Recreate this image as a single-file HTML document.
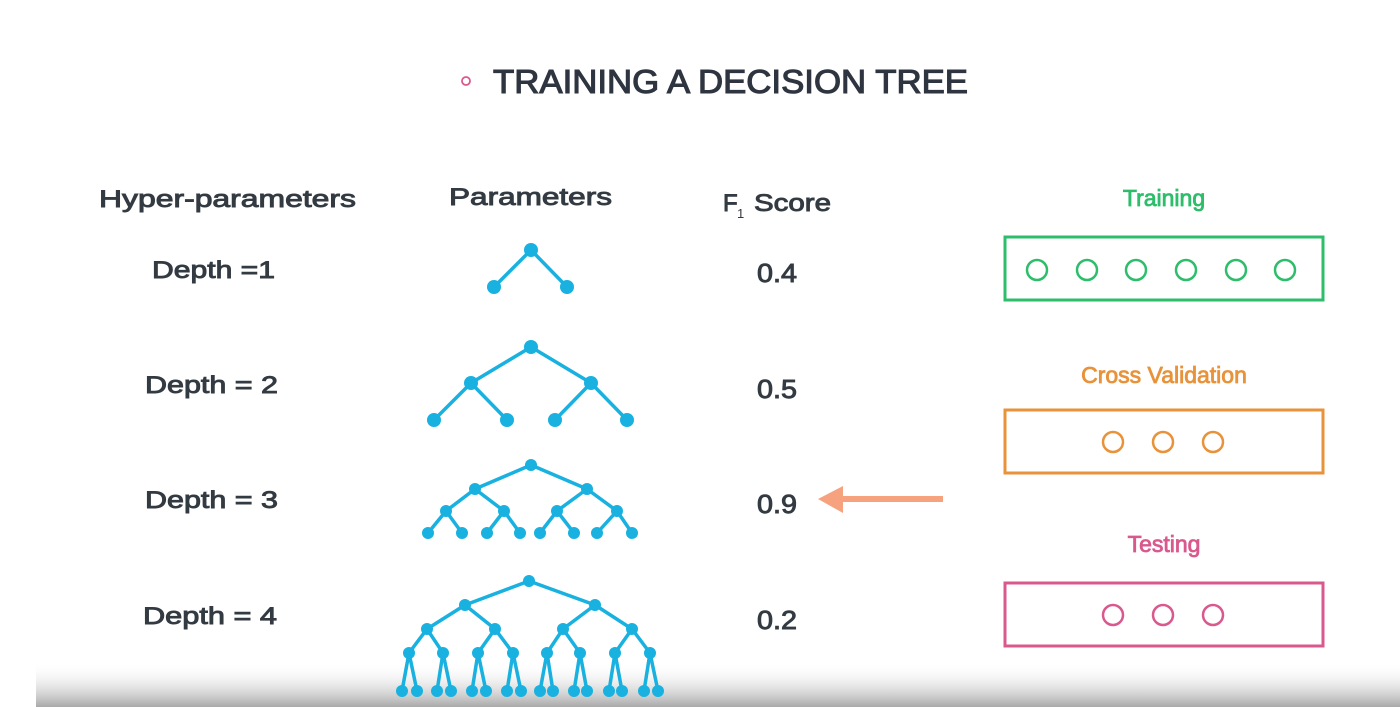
<!DOCTYPE html>
<html><head><meta charset="utf-8"><style>
html,body{margin:0;padding:0;background:#fff;width:1400px;height:707px;overflow:hidden}
svg{display:block}
text{font-family:"Liberation Sans",sans-serif}
.t{fill:#333a42;font-size:24px;stroke:#333a42;stroke-width:0.9}
.s{fill:#333a42;font-size:26px;stroke:#333a42;stroke-width:0.9}
.b line{stroke:#18b1e0;stroke-width:3.5}
.b circle{fill:#18b1e0}
</style></head><body>
<svg width="1400" height="707" viewBox="0 0 1400 707" xmlns="http://www.w3.org/2000/svg">
<defs><linearGradient id="g" x1="0" y1="0" x2="0" y2="1"><stop offset="0" stop-color="#fff" stop-opacity="0"/><stop offset="1" stop-color="#a8a8a8"/></linearGradient></defs>
<rect x="36" y="662" width="1364" height="45" fill="url(#g)"/>
<circle cx="466" cy="81" r="4" fill="none" stroke="#d9598e" stroke-width="1.8"/>
<text x="493" y="93" font-size="33" fill="#2e3540" stroke="#2e3540" stroke-width="1.1" textLength="475" lengthAdjust="spacingAndGlyphs">TRAINING A DECISION TREE</text>

<text class="t" x="99" y="207" textLength="257" lengthAdjust="spacingAndGlyphs">Hyper-parameters</text>
<text class="t" x="449" y="205" textLength="163" lengthAdjust="spacingAndGlyphs">Parameters</text>
<text class="t" x="723" y="211">F</text><text x="737" y="218" font-size="13" fill="#333a42">1</text>
<text class="t" x="754" y="211" textLength="77" lengthAdjust="spacingAndGlyphs">Score</text>

<text class="t" x="152" y="278" textLength="123" lengthAdjust="spacingAndGlyphs">Depth =1</text>
<text class="t" x="145" y="393" textLength="133" lengthAdjust="spacingAndGlyphs">Depth = 2</text>
<text class="t" x="145" y="508" textLength="133" lengthAdjust="spacingAndGlyphs">Depth = 3</text>
<text class="t" x="143" y="624" textLength="134" lengthAdjust="spacingAndGlyphs">Depth = 4</text>

<text class="s" x="757" y="282" textLength="40" lengthAdjust="spacingAndGlyphs">0.4</text>
<text class="s" x="757" y="398" textLength="40" lengthAdjust="spacingAndGlyphs">0.5</text>
<text class="s" x="757" y="513" textLength="40" lengthAdjust="spacingAndGlyphs">0.9</text>
<text class="s" x="757" y="629" textLength="40" lengthAdjust="spacingAndGlyphs">0.2</text>

<g class="b">
<line x1="531" y1="250" x2="494" y2="287"/><line x1="531" y1="250" x2="567" y2="287"/>
<circle cx="531" cy="250" r="7"/><circle cx="494" cy="287" r="7"/><circle cx="567" cy="287" r="7"/>
<line x1="531" y1="347" x2="471" y2="383"/><line x1="531" y1="347" x2="591" y2="383"/>
<line x1="471" y1="383" x2="434" y2="420"/><line x1="471" y1="383" x2="507" y2="420"/>
<line x1="591" y1="383" x2="555" y2="420"/><line x1="591" y1="383" x2="627" y2="420"/>
<circle cx="531" cy="347" r="7"/><circle cx="471" cy="383" r="7"/><circle cx="591" cy="383" r="7"/>
<circle cx="434" cy="420" r="7"/><circle cx="507" cy="420" r="7"/><circle cx="555" cy="420" r="7"/><circle cx="627" cy="420" r="7"/>
<line x1="531" y1="465" x2="475" y2="489"/><line x1="531" y1="465" x2="587" y2="489"/>
<line x1="475" y1="489" x2="446" y2="511"/><line x1="475" y1="489" x2="504" y2="511"/>
<line x1="587" y1="489" x2="557" y2="511"/><line x1="587" y1="489" x2="617" y2="511"/>
<line x1="446" y1="511" x2="428" y2="533"/><line x1="446" y1="511" x2="462" y2="533"/>
<line x1="504" y1="511" x2="487" y2="533"/><line x1="504" y1="511" x2="520" y2="533"/>
<line x1="557" y1="511" x2="540" y2="533"/><line x1="557" y1="511" x2="574" y2="533"/>
<line x1="617" y1="511" x2="597" y2="533"/><line x1="617" y1="511" x2="632" y2="533"/>
<circle cx="531" cy="465" r="6"/><circle cx="475" cy="489" r="6"/><circle cx="587" cy="489" r="6"/>
<circle cx="446" cy="511" r="6"/><circle cx="504" cy="511" r="6"/><circle cx="557" cy="511" r="6"/><circle cx="617" cy="511" r="6"/>
<circle cx="428" cy="533" r="6"/><circle cx="462" cy="533" r="6"/><circle cx="487" cy="533" r="6"/><circle cx="520" cy="533" r="6"/>
<circle cx="540" cy="533" r="6"/><circle cx="574" cy="533" r="6"/><circle cx="597" cy="533" r="6"/><circle cx="632" cy="533" r="6"/>
<line x1="529" y1="581" x2="465" y2="605"/><line x1="529" y1="581" x2="595" y2="605"/>
<line x1="465" y1="605" x2="427" y2="629"/><line x1="465" y1="605" x2="495" y2="629"/>
<line x1="595" y1="605" x2="563" y2="629"/><line x1="595" y1="605" x2="632" y2="629"/>
<line x1="427" y1="629" x2="409" y2="653"/><line x1="427" y1="629" x2="443" y2="653"/>
<line x1="495" y1="629" x2="478" y2="653"/><line x1="495" y1="629" x2="513" y2="653"/>
<line x1="563" y1="629" x2="547" y2="653"/><line x1="563" y1="629" x2="580" y2="653"/>
<line x1="632" y1="629" x2="615" y2="653"/><line x1="632" y1="629" x2="650" y2="653"/>
<line x1="409" y1="653" x2="402" y2="691"/><line x1="409" y1="653" x2="417" y2="691"/>
<line x1="443" y1="653" x2="437" y2="691"/><line x1="443" y1="653" x2="451" y2="691"/>
<line x1="478" y1="653" x2="472" y2="691"/><line x1="478" y1="653" x2="486" y2="691"/>
<line x1="513" y1="653" x2="507" y2="691"/><line x1="513" y1="653" x2="521" y2="691"/>
<line x1="547" y1="653" x2="540" y2="691"/><line x1="547" y1="653" x2="553" y2="691"/>
<line x1="580" y1="653" x2="574" y2="691"/><line x1="580" y1="653" x2="587" y2="691"/>
<line x1="615" y1="653" x2="609" y2="691"/><line x1="615" y1="653" x2="622" y2="691"/>
<line x1="650" y1="653" x2="644" y2="691"/><line x1="650" y1="653" x2="658" y2="691"/>
<circle cx="529" cy="581" r="6"/><circle cx="465" cy="605" r="6"/><circle cx="595" cy="605" r="6"/>
<circle cx="427" cy="629" r="6"/><circle cx="495" cy="629" r="6"/><circle cx="563" cy="629" r="6"/><circle cx="632" cy="629" r="6"/>
<circle cx="409" cy="653" r="6"/><circle cx="443" cy="653" r="6"/><circle cx="478" cy="653" r="6"/><circle cx="513" cy="653" r="6"/>
<circle cx="547" cy="653" r="6"/><circle cx="580" cy="653" r="6"/><circle cx="615" cy="653" r="6"/><circle cx="650" cy="653" r="6"/>
<circle cx="402" cy="691" r="6"/><circle cx="417" cy="691" r="6"/><circle cx="437" cy="691" r="6"/><circle cx="451" cy="691" r="6"/>
<circle cx="472" cy="691" r="6"/><circle cx="486" cy="691" r="6"/><circle cx="507" cy="691" r="6"/><circle cx="521" cy="691" r="6"/>
<circle cx="540" cy="691" r="6"/><circle cx="553" cy="691" r="6"/><circle cx="574" cy="691" r="6"/><circle cx="587" cy="691" r="6"/>
<circle cx="609" cy="691" r="6"/><circle cx="622" cy="691" r="6"/><circle cx="644" cy="691" r="6"/><circle cx="658" cy="691" r="6"/>
</g>

<rect x="838" y="496" width="105" height="6" fill="#f6a27e"/>
<polygon points="818,499 843,486 843,513" fill="#f6a27e"/>

<text x="1164" y="206" font-size="23" fill="#2ebd6b" stroke="#2ebd6b" stroke-width="0.8" text-anchor="middle">Training</text>
<rect x="1005" y="237" width="318" height="63" fill="none" stroke="#2ebd6b" stroke-width="3"/>
<g fill="none" stroke="#2ebd6b" stroke-width="2.5">
<circle cx="1037" cy="270" r="10"/><circle cx="1087" cy="270" r="10"/><circle cx="1136" cy="270" r="10"/><circle cx="1186" cy="270" r="10"/><circle cx="1236" cy="270" r="10"/><circle cx="1285" cy="270" r="10"/>
</g>
<text x="1164" y="383" font-size="23" fill="#e8923a" stroke="#e8923a" stroke-width="0.8" text-anchor="middle">Cross Validation</text>
<rect x="1005" y="410" width="318" height="63" fill="none" stroke="#e8923a" stroke-width="3"/>
<g fill="none" stroke="#e8923a" stroke-width="2.5">
<circle cx="1113" cy="442" r="10"/><circle cx="1163" cy="442" r="10"/><circle cx="1213" cy="442" r="10"/>
</g>
<text x="1164" y="552" font-size="23" fill="#d9598e" stroke="#d9598e" stroke-width="0.8" text-anchor="middle">Testing</text>
<rect x="1005" y="583" width="318" height="63" fill="none" stroke="#d9598e" stroke-width="3"/>
<g fill="none" stroke="#d9598e" stroke-width="2.5">
<circle cx="1113" cy="615" r="10"/><circle cx="1163" cy="615" r="10"/><circle cx="1213" cy="615" r="10"/>
</g>
</svg>
</body></html>
